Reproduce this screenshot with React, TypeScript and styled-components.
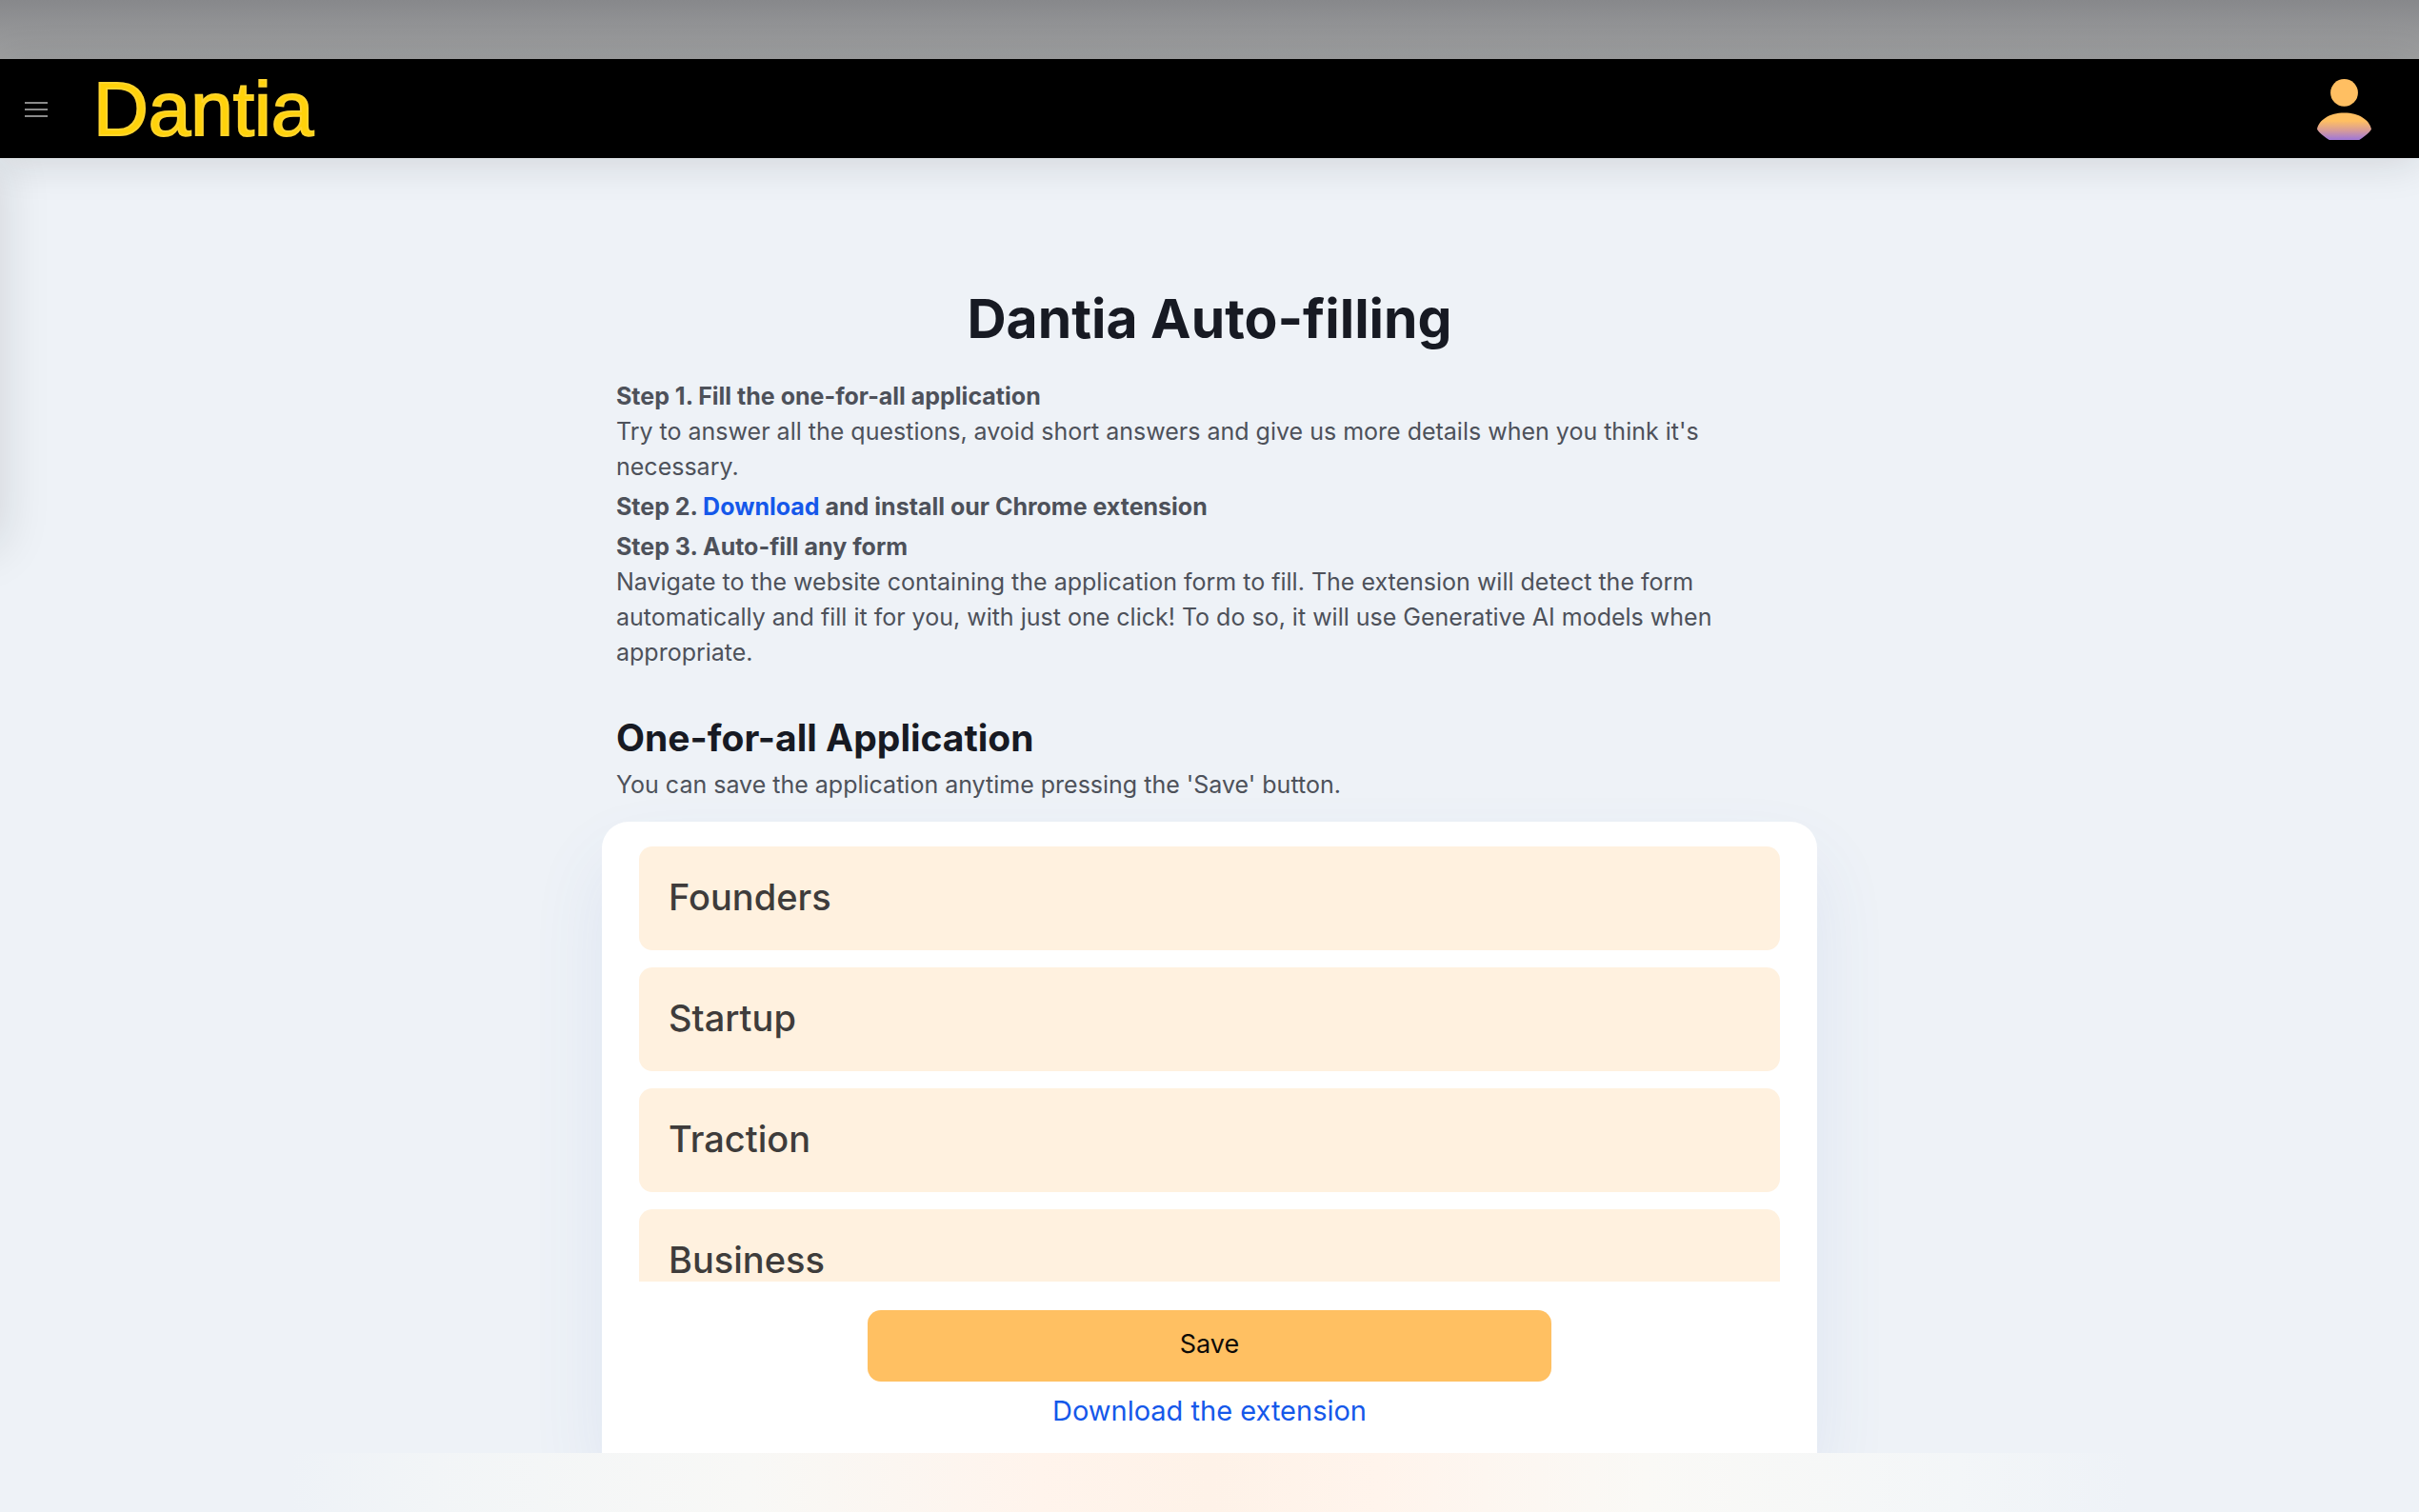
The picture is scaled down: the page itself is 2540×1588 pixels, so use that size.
import React from "react";
import styled, { createGlobalStyle } from "styled-components";

const GlobalStyle = createGlobalStyle`
  *, *::before, *::after { box-sizing: border-box; }
  body {
    margin: 0;
    background: #eef2f7;
    color: #4d515a;
    font-family: Inter, "Noto Sans", sans-serif;
    font-size: 25px;
    line-height: 37px;
  }
  h1, h2, h3, p { margin: 0; }
`;

const Page = styled.div`
  position: relative;
  display: flex;
  flex-direction: column;
  height: 100vh;
  overflow: hidden;
`;

const TopBand = styled.div`
  flex: none;
  height: 62px;
  background: linear-gradient(#87888b, #a0a1a2);
`;

const Header = styled.header`
  position: relative;
  z-index: 2;
  flex: none;
  display: flex;
  align-items: center;
  height: 104px;
  padding: 2px 50px 0 26px;
  background: #000;
  box-shadow: 0 4px 44px rgba(20, 30, 30, 0.14);
`;

const IconButton = styled.button`
  display: flex;
  padding: 0;
  border: 0;
  background: none;
  cursor: pointer;
`;

const Logo = styled.a`
  margin: 0 auto 0 48px;
  color: #ffd20a;
  font-family: "Liberation Sans", Arial, sans-serif;
  font-size: 80px;
  line-height: 100px;
  text-decoration: none;
  -webkit-text-stroke: 2px #ffd52e;
`;

const ClosedDrawer = styled.aside`
  position: absolute;
  top: 166px;
  left: -400px;
  width: 400px;
  height: 408px;
  box-shadow: 0 0 50px rgba(20, 30, 30, 0.14);
`;

const Main = styled.main`
  flex: 1;
  min-height: 0;
  display: flex;
  flex-direction: column;
  width: 100%;
  max-width: 1276px;
  margin: 0 auto;
  padding-top: 134px;
`;

const Intro = styled.div`
  flex: none;
  padding: 0 15px 20px;
`;

const Title = styled.h1`
  margin-bottom: 27px;
  color: #171a23;
  font-size: 57px;
  font-weight: 700;
  line-height: 70px;
  text-align: center;
`;

const Step = styled.section`
  margin-bottom: 4px;
`;

const StepTitle = styled.h3`
  font-size: 25px;
  font-weight: 700;
  line-height: 38px;
`;

const Link = styled.a`
  color: #1558ea;
  text-decoration: none;
`;

const SectionTitle = styled.h2`
  margin: 49px 0 9px;
  color: #171a23;
  font-size: 39px;
  font-weight: 700;
  line-height: 44px;
`;

const Card = styled.form`
  flex: 1;
  min-height: 0;
  display: flex;
  flex-direction: column;
  align-items: center;
  padding: 26px 39px 24px;
  border-radius: 28px 28px 0 0;
  background: #fff;
  box-shadow: 0 40px 80px rgba(70, 100, 190, 0.09);
`;

const SectionList = styled.div`
  flex: 1;
  align-self: stretch;
  min-height: 0;
  display: flex;
  flex-direction: column;
  gap: 18px;
  overflow-y: auto;
  scrollbar-width: none;
`;

const SectionButton = styled.button`
  flex: none;
  height: 109px;
  padding: 0 31px 4px;
  border: 0;
  border-radius: 14px;
  background: #fff1df;
  color: #3e3c3b;
  font-family: inherit;
  font-size: 38px;
  font-weight: 500;
  text-align: left;
  cursor: pointer;
`;

const SaveButton = styled.button`
  flex: none;
  width: 60%;
  height: 75px;
  margin: 30px 0 11px;
  padding: 0 0 4px;
  border: 0;
  border-radius: 14px;
  background: #ffc062;
  color: #0d0b08;
  font-family: inherit;
  font-size: 27px;
  cursor: pointer;
`;

const DownloadLink = styled(Link)`
  flex: none;
  font-size: 29px;
  line-height: 40px;
`;

const BottomGlow = styled.footer`
  position: relative;
  z-index: 1;
  flex: none;
  height: 62px;
  background:
    linear-gradient(90deg, #eef2f7 12%, #f2f5f7 18%, #f8f8f6 31%, #fff4ec 43%, #fef2e8 50%, #fff4ec 57%, #faf9f6 68%, #f3f6f8 81%, #eef2f7 88%);
`;

const MenuIcon = () => (
  <svg width="24" height="18" viewBox="0 0 24 18" stroke="#8a8a8a" strokeWidth="2" aria-hidden="true">
    <path d="M0 2h24M0 9h24M0 16h24" />
  </svg>
);

const UserIcon = () => (
  <svg width="57" height="64" viewBox="0 0 57 64" aria-hidden="true">
    <defs>
      <linearGradient id="body" x1="0" y1="0" x2="0" y2="1">
        <stop offset="0.3" stopColor="#ffbf62" />
        <stop offset="0.65" stopColor="#d79c98" />
        <stop offset="0.95" stopColor="#a57bd2" />
      </linearGradient>
    </defs>
    <circle cx="28.5" cy="14.4" r="14.4" fill="#ffbf62" />
    <path
      d="M0 52.500C2 43 13 35.500 28.500 35.500S55 43 57 52.500C56.500 55 50 60 45 63.500Q44.500 64 43 64H14Q12.500 64 12 63.500C7 60 .500 55 0 52.500Z"
      fill="url(#body)"
    />
  </svg>
);

const sections = ["Founders", "Startup", "Traction", "Business"];

export default function App() {
  return (
    <Page>
      <GlobalStyle />
      <TopBand />
      <Header>
        <IconButton type="button" aria-label="Open menu">
          <MenuIcon />
        </IconButton>
        <Logo href="#">Dantia</Logo>
        <IconButton type="button" aria-label="Account">
          <UserIcon />
        </IconButton>
      </Header>
      <ClosedDrawer aria-hidden="true" />
      <Main>
        <Intro>
          <Title>Dantia Auto-filling</Title>
          <Step>
            <StepTitle>Step 1. Fill the one-for-all application</StepTitle>
            <p>
              Try to answer all the questions, avoid short answers and give us more details when you think it's
              necessary.
            </p>
          </Step>
          <Step>
            <StepTitle>
              Step 2. <Link href="#download">Download</Link> and install our Chrome extension
            </StepTitle>
          </Step>
          <Step>
            <StepTitle>Step 3. Auto-fill any form</StepTitle>
            <p>
              Navigate to the website containing the application form to fill. The extension will detect the form
              automatically and fill it for you, with just one click! To do so, it will use Generative AI models when
              appropriate.
            </p>
          </Step>
          <SectionTitle>One-for-all Application</SectionTitle>
          <p>You can save the application anytime pressing the 'Save' button.</p>
        </Intro>
        <Card onSubmit={(event) => event.preventDefault()}>
          <SectionList>
            {sections.map((name) => (
              <SectionButton key={name} type="button">
                {name}
              </SectionButton>
            ))}
          </SectionList>
          <SaveButton type="submit">Save</SaveButton>
          <DownloadLink href="#download">Download the extension</DownloadLink>
        </Card>
      </Main>
      <BottomGlow />
    </Page>
  );
}
